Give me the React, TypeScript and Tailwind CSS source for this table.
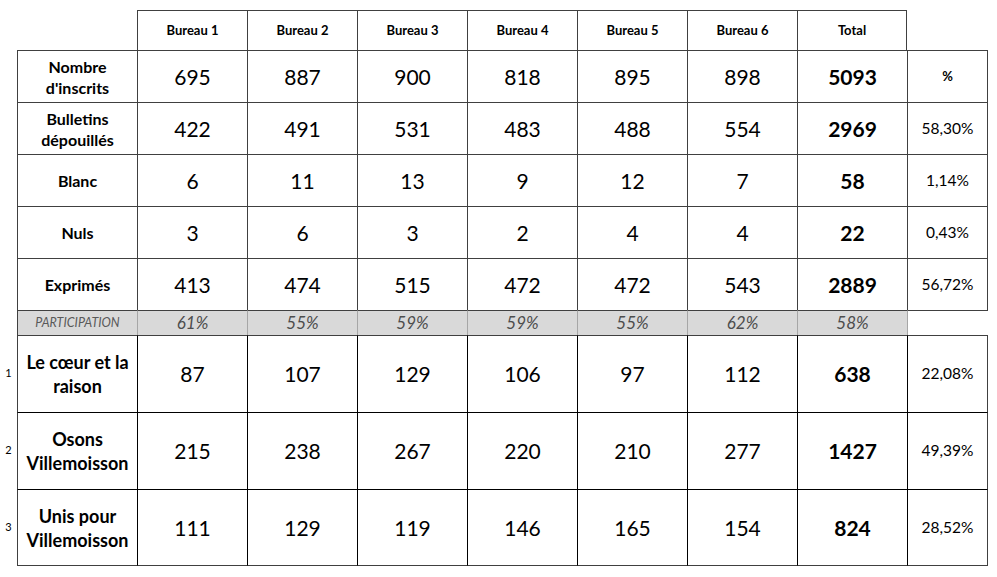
import clsx from 'clsx'

const bureaux = ['Bureau 1', 'Bureau 2', 'Bureau 3', 'Bureau 4', 'Bureau 5', 'Bureau 6']

const stats = [
  { label: ["Nombre", "d'inscrits"], values: [695, 887, 900, 818, 895, 898], total: 5093, pct: '%' },
  { label: ['Bulletins', 'dépouillés'], values: [422, 491, 531, 483, 488, 554], total: 2969, pct: '58,30%' },
  { label: ['Blanc'], values: [6, 11, 13, 9, 12, 7], total: 58, pct: '1,14%' },
  { label: ['Nuls'], values: [3, 6, 3, 2, 4, 4], total: 22, pct: '0,43%' },
  { label: ['Exprimés'], values: [413, 474, 515, 472, 472, 543], total: 2889, pct: '56,72%' },
]

const participation = ['61%', '55%', '59%', '59%', '55%', '62%', '58%']

const listes = [
  { num: 1, label: ['Le cœur et la', 'raison'], values: [87, 107, 129, 106, 97, 112], total: 638, pct: '22,08%' },
  { num: 2, label: ['Osons', 'Villemoisson'], values: [215, 238, 267, 220, 210, 277], total: 1427, pct: '49,39%' },
  { num: 3, label: ['Unis pour', 'Villemoisson'], values: [111, 129, 119, 146, 165, 154], total: 824, pct: '28,52%' },
]

const cell = 'flex items-center justify-center text-center border-l border-t border-[#404040]'

export default function App() {
  return (
    <div
      className="w-[997px] h-[577px] bg-white text-black pt-[10px]"
      style={{ fontFamily: 'Lato, "Open Sans", sans-serif' }}
    >
      <div className="grid grid-cols-[17px_120px_repeat(7,110px)_81px] grid-rows-[40px_repeat(5,52px)_25px_repeat(3,77px)]">
        {/* en-tête */}
        <div />
        <div />
        {bureaux.map((b) => (
          <div key={b} className={clsx(cell, 'text-[13px] font-bold')}>{b}</div>
        ))}
        <div className={clsx(cell, 'border-r text-[13px] font-bold')}>Total</div>
        <div />

        {/* statistiques */}
        {stats.map((row) => (
          <div key={row.label[0]} className="contents">
            <div />
            <div className={clsx(cell, 'flex-col text-[16px] font-bold leading-[21px]')}>
              {row.label.map((l) => (
                <span key={l}>{l}</span>
              ))}
            </div>
            {row.values.map((v, i) => (
              <div key={i} className={clsx(cell, 'text-[21px]')}>{v}</div>
            ))}
            <div className={clsx(cell, 'text-[21px] font-bold')}>{row.total}</div>
            <div
              className={clsx(
                cell,
                'border-r',
                row.pct === '%' ? 'text-[13px] font-bold' : 'text-[15.5px]'
              )}
            >
              {row.pct}
            </div>
          </div>
        ))}

        {/* participation */}
        <div />
        <div className="flex items-center justify-center bg-[#d9d9d9] border-l border-t border-l-[#404040] border-t-[#404040] text-[12.5px] italic text-[#595959]">
          PARTICIPATION
        </div>
        {participation.map((p, i) => (
          <div
            key={i}
            className="flex items-center justify-center bg-[#d9d9d9] border-l border-t border-l-[#a6a6a6] border-t-[#404040] text-[17px] italic text-[#4d4d4d]"
          >
            {p}
          </div>
        ))}
        <div className="border-l border-t border-l-[#a6a6a6] border-t-[#404040]" />

        {/* listes */}
        {listes.map((row, r) => {
          const last = r === listes.length - 1
          return (
            <div key={row.num} className="contents">
              <div className="flex items-center justify-center text-[11px]">{row.num}</div>
              <div
                className={clsx(
                  'flex flex-col items-center justify-center border-l border-t border-l-[#404040] text-[18px] font-bold leading-[24px]',
                  r === 0 ? 'border-t-[#404040]' : 'border-t-black',
                  last && 'border-b border-b-[#404040]'
                )}
              >
                {row.label.map((l) => (
                  <span key={l}>{l}</span>
                ))}
              </div>
              {[...row.values, row.total].map((v, i) => (
                <div
                  key={i}
                  className={clsx(
                    'flex items-center justify-center border-l border-t border-l-black text-[21px]',
                    r === 0 ? 'border-t-[#404040]' : 'border-t-black',
                    last && 'border-b border-b-[#404040]',
                    i === 6 && 'font-bold'
                  )}
                >
                  {v}
                </div>
              ))}
              <div
                className={clsx(
                  'flex items-center justify-center border-l border-t border-r border-l-black border-r-[#404040] text-[15.5px]',
                  r === 0 ? 'border-t-[#404040]' : 'border-t-black',
                  last && 'border-b border-b-[#404040]'
                )}
              >
                {row.pct}
              </div>
            </div>
          )
        })}
      </div>
    </div>
  )
}
